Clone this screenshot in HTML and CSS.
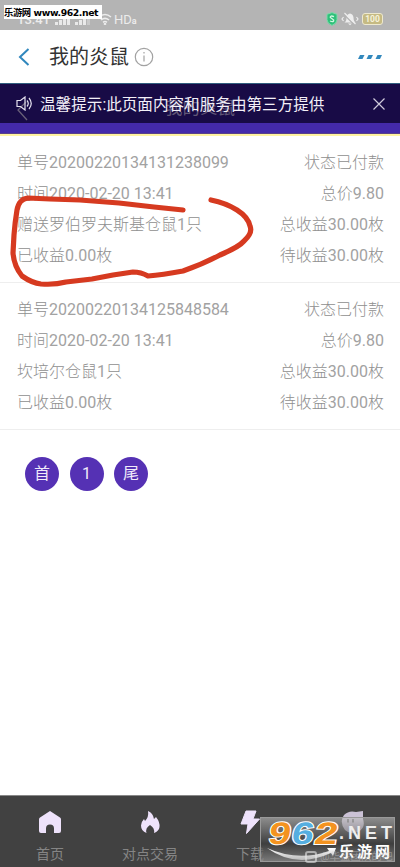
FILE: index.html
```html
<!DOCTYPE html>
<html lang="zh-CN">
<head>
<meta charset="utf-8">
<title>我的炎鼠</title>
<link rel="stylesheet" href="styles.css">
</head>
<body>
<div class="screen">
  <header class="status">
    <div class="status-left">
      <span class="clock">13:41</span>
      <svg width="37" height="12" viewBox="0 0 37 12" fill="#e9e9e9"><path d="M0 9h3v3H0zM4 7h3v5H4zM8 4h3v8H8zM12 1h3v11h-3zM20 9h3v3h-3zM24 7h3v5h-3zM28 4h3v8h-3z"/><path d="M32 1h3v11h-3z" opacity=".4"/></svg>
      <svg class="wifi" width="14" height="12" viewBox="0 0 14 12" fill="none" stroke="#ededed" stroke-width="1.6"><path d="M1 4Q7-1 13 4M3 7q4-3.400 8 0M5 9.300q2-1.500 4 0"/><circle cx="7" cy="11" r=".5"/></svg>
      <span class="hd">HD<small>a</small></span>
    </div>
    <div class="status-right">
      <svg width="12" height="14" viewBox="0 0 12 14"><path d="M6 .6l5 1.700v5.400Q11 11.500 6 13.400 1 11.500 1 7.700V2.300z" fill="#2fc07a" stroke="#7edbaa"/><path d="M8 4.700Q4 3 4.300 5.500L7.700 8Q8 10.500 4 9" fill="none" stroke="#d3f6e2" stroke-width="1.300"/></svg>
      <svg width="18" height="14" viewBox="0 0 18 14"><path d="M3.500 10.500q2-1 2-5Q6 2 9 1.500q3 .5 3.500 4 0 4 2 5zM7 11.500h4l-2 1.700z" fill="#eee"/><path d="M2.500 2l11 11" stroke="#b3b3b3" stroke-width="1.300"/><path d="M3.500 1l11 11M2.500 5L1 7l1.500 2M15.500 5L17 7l-1.500 2" fill="none" stroke="#eee" stroke-width="1.200"/></svg>
      <span class="battery">100</span>
    </div>
    <div class="site-tag">乐游网 www.962.net</div>
  </header>
  <nav class="titlebar">
    <svg class="back" width="12" height="18" viewBox="0 0 12 18" fill="none" stroke="#3087bd" stroke-width="2"><path d="M10.500 1L2 9l8.500 8"/></svg>
    <h1>我的炎鼠</h1>
    <svg class="info" width="20" height="20" viewBox="0 0 20 20" fill="none" stroke="#a2a2a2" stroke-width="1.200"><circle cx="10" cy="10" r="8.700"/><path d="M10 8.500v6M10 5v1.500"/></svg>
    <svg class="more" width="24" height="6" viewBox="0 0 24 6" fill="#3288bd"><path d="M2 1h4.500L4.500 5H0zM10.500 1H15L13 5H8.500zM19.500 1H24L22 5h-4.500z"/></svg>
  </nav>
  <section class="banner">
    <div class="notice">
      <span class="ghost-title">我的炎鼠</span>
      <svg class="ghost-back" width="14" height="20" viewBox="0 0 14 20" fill="none" stroke="#696078" stroke-width="1.300"><path d="M10 1L2 9l9 10"/></svg>
      <svg class="speaker" width="17" height="15" viewBox="0 0 17 15" fill="none" stroke="#e6e2ef" stroke-width="1.200"><path d="M1 4.500h3.500L9 1v13l-4.500-3.500H1zM11 4.500q2.500 3 0 6M13 2q4.500 5.500 0 11"/></svg>
      <span class="notice-text">温馨提示:此页面内容和服务由第三方提供</span>
      <svg class="close" width="14" height="14" viewBox="0 0 14 14" stroke="#cfcadb" stroke-width="1.200"><path d="M1.500 1.500l11 11M12.500 1.500l-11 11"/></svg>
    </div>
  </section>
  <main>
    <article class="order">
      <div class="row"><span>单号<b>20200220134131238099</b></span><span>状态已付款</span></div>
      <div class="row"><span>时间<b>2020-02-20 13:41</b></span><span>总价<b>9.80</b></span></div>
      <div class="row"><span>赠送罗伯罗夫斯基仓鼠<b>1</b>只</span><span>总收益<b>30.00</b>枚</span></div>
      <div class="row"><span>已收益<b>0.00</b>枚</span><span>待收益<b>30.00</b>枚</span></div>
      <svg class="scribble" width="260" height="100" viewBox="0 190 260 100" fill="none" stroke="#d63a20" stroke-width="5.200" stroke-linecap="round" stroke-linejoin="round"><path d="M183 210L154 207 119 203 80 200 50 199 28 198Q19 199 17 210 15 222 14 235L13 253Q14 266 22 276 32 283 41 284 55 285 66 282L92 279 113 275 133 272Q141 272 148 276 162 275 183 271 203 264 220 255 239 247 244 241 253 233 250 226 248 217 237 210 226 203 211 200"/></svg>
    </article>
    <article class="order">
      <div class="row"><span>单号<b>20200220134125848584</b></span><span>状态已付款</span></div>
      <div class="row"><span>时间<b>2020-02-20 13:41</b></span><span>总价<b>9.80</b></span></div>
      <div class="row"><span>坎培尔仓鼠<b>1</b>只</span><span>总收益<b>30.00</b>枚</span></div>
      <div class="row"><span>已收益<b>0.00</b>枚</span><span>待收益<b>30.00</b>枚</span></div>
    </article>
    <div class="pager"><span>首</span><span>1</span><span>尾</span></div>
  </main>
  <footer class="tabs">
    <div class="tab"><svg width="24" height="24" viewBox="0 0 24 24" fill="#eee2fb"><path d="M12 1L22 7.500Q23 8.200 23 9.500V21q0 2-2 2h-5v-4.500a4 4 0 0 0-8 0V23H3q-2 0-2-2V9.500Q1 8.200 2 7.500z"/></svg><span>首页</span></div>
    <div class="tab"><svg width="24" height="24" viewBox="0 0 24 24" fill="#eee2fb"><path d="M10 1q5 2 6 8l2-2q4 5 3.500 10-.5 4-5.500 6 1-5-4-8-5 3-3.500 8Q3 21 3 15.500 3 12 6 9l1 2q4-4 3-10z"/></svg><span>对点交易</span></div>
    <div class="tab"><svg width="24" height="24" viewBox="0 0 24 24" fill="#eee2fb"><path d="M8 1h10l-3 8h6.500L8.500 23.500 10 14H3z" stroke="#eee2fb" stroke-linejoin="round"/></svg><span>下载</span></div>
    <div class="watermark">
      <svg width="135" height="45" viewBox="0 0 135 45">
        <defs><linearGradient id="shade" x1="0" y1="0" x2="0" y2="1"><stop offset="0" stop-color="#fff"/><stop offset="1" stop-color="#bbb"/></linearGradient></defs>
        <path d="M7 31Q38 45 69 34l-2-3 9 0-3 8-2-3Q36 52 7 31z" fill="url(#shade)"/>
        <g class="numerals" transform="skewX(-10)"><text x="12" y="27" fill="#f39320" textLength="22" lengthAdjust="spacingAndGlyphs">9</text><text x="35" y="27" fill="#55aee0" textLength="22" lengthAdjust="spacingAndGlyphs">6</text><text x="58" y="27" fill="#f39320" textLength="23" lengthAdjust="spacingAndGlyphs">2</text></g>
        <text class="net" x="79" y="22" textLength="53">.NET</text>
        <text class="brand" x="79" y="40" textLength="51">乐游网</text>
      </svg>
    </div>
    <div class="tab face"><svg width="24" height="24" viewBox="0 0 24 24"><path d="M3 5Q8 0 15 2l7-1v8q3 9-5 13Q9 25 4 20-2 12 3 5z" fill="#eee2fb" opacity=".8"/><path d="M7 9v3.500M12 9v3.500" stroke="#555" stroke-width="1.500"/></svg></div>
    <div class="credit"><i></i>@华盛团队的吧</div>
  </footer>
</div>
</body>
</html>
```
FILE: styles.css
```css
* { box-sizing: border-box; }
body { margin: 0; font-family: Roboto, "Noto Sans CJK SC", sans-serif; background: #fff; }
svg { display: block; flex: none; }
.screen { width: 400px; height: 867px; display: flex; flex-direction: column; overflow: hidden; }
.status { position: relative; height: 30px; flex: none; background: #b4b4b4; display: flex; justify-content: space-between; padding: 9px 17px 0 17px; color: #ececec; }
.status-left, .status-right { display: flex; align-items: center; height: 20px; }
.clock { width: 38px; font-size: 13px; font-weight: 500; }
.wifi { margin-left: 6px; }
.hd { margin-left: 2px; font-size: 13px; white-space: nowrap; }
.hd small { font-size: 9px; font-weight: bold; }
.status-right { gap: 3px; }
.battery { width: 21px; height: 12px; border: 1px solid #eee9cf; border-radius: 3px; background: #c5ba83; color: #f7f3dc; font-size: 8.500px; line-height: 10px; text-align: center; font-weight: bold; }
.site-tag { position: absolute; left: 4px; top: 5px; width: 98px; height: 14px; background: #fff; color: #000; font: bold 9.300px/15px "DejaVu Sans", "Noto Sans CJK SC", sans-serif; white-space: nowrap; letter-spacing: -.4px; }
.titlebar { height: 53px; flex: none; display: flex; align-items: center; padding: 0 18px; }
h1 { margin: 0 0 0 19px; font-size: 20px; font-weight: 400; line-height: 30px; color: #333; }
.info { margin-left: 5px; }
.more { margin-left: auto; }
.banner { height: 53px; flex: none; background: #442aaa; border-bottom: 2px solid #fff3a0; box-shadow: inset 0 -1px #59418a; }
.notice { position: relative; height: 40px; background: #180b46; border-top: 1px solid #315f7e; display: flex; align-items: center; padding: 0 14px 0 16px; color: #f3f0f8; }
.notice-text { position: relative; margin-left: 7px; padding-bottom: 2px; font-size: 15.600px; white-space: nowrap; }
.speaker { position: relative; }
.close { margin-left: auto; }
.ghost-title { position: absolute; left: 165px; top: 12px; font-size: 17.500px; line-height: 24px; color: #605676; }
.ghost-back { position: absolute; left: 16px; top: 17px; }
.order { position: relative; height: 147px; padding: 11px 16px 0 17px; border-bottom: 1px solid #eee; color: #8f8f8f; font-size: 16px; }
.row { display: flex; justify-content: space-between; height: 31px; line-height: 31px; font-weight: 300; }
.row b { font-weight: 400; color: #a2a2a2; }
.scribble { position: absolute; left: 0; top: 54px; }
.pager { display: flex; gap: 10.500px; padding: 27px 25px; }
.pager span { width: 34px; height: 34px; border-radius: 50%; background: #5531b4; color: #f0eafa; font-size: 16px; line-height: 33px; text-align: center; }
main { flex: 1; min-height: 0; }
.tabs { position: relative; height: 72px; flex: none; display: flex; background: #414141; border-top: 1px solid #888; }
.tab { width: 100px; display: flex; flex-direction: column; align-items: center; padding-top: 14px; color: #858585; font-size: 14px; line-height: 20px; }
.tab span { margin-top: 10px; }
.face { padding-left: 6px; }
.watermark { position: absolute; left: 260px; top: 21px; width: 135px; height: 45px; border: 1px solid #999; background: linear-gradient(rgba(190,190,190,.6), rgba(60,60,60,.6) 60%, rgba(145,145,145,.7)); }
.watermark svg { margin: -1px; overflow: visible; }
.numerals { font: bold 31px "Liberation Sans", sans-serif; stroke: #fff; stroke-width: 2px; paint-order: stroke; }
.net { font: bold 18px "Liberation Sans", sans-serif; fill: #eee; }
.brand { font: bold 15px "Noto Sans CJK SC", sans-serif; fill: #fff; }
.credit { position: absolute; left: 305px; top: 51px; display: flex; align-items: center; gap: 3px; color: rgba(210,210,210,.42); font-size: 10.500px; line-height: 20px; white-space: nowrap; }
.credit i { width: 12px; height: 12px; border: 2px solid rgba(230,230,230,.6); border-radius: 3px; }
```
